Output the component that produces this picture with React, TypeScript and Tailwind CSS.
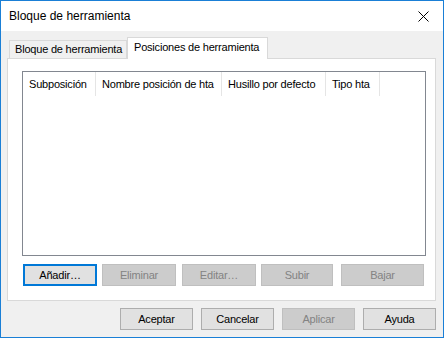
import React from 'react';

const columns = [
  { label: 'Subposición', width: 'w-[73px]' },
  { label: 'Nombre posición de hta', width: 'w-[126px]' },
  { label: 'Husillo por defecto', width: 'w-[104px]' },
  { label: 'Tipo hta', width: 'w-[54px]' },
];

const Button: React.FC<{ label: string; disabled?: boolean; focused?: boolean; className?: string }> = ({
  label,
  disabled,
  focused,
  className = '',
}) => {
  let style = 'bg-[#e1e1e1] border border-[#adadad] text-black';
  if (disabled) style = 'bg-[#cccccc] border border-[#bfbfbf] text-[#838383]';
  if (focused) style = 'bg-[#e1e1e1] border-2 border-[#0078d7] text-black';
  return (
    <div
      className={`h-[22px] shrink-0 flex items-center justify-center text-[11px] tracking-[-0.2px] leading-none whitespace-nowrap ${style} ${className}`}
    >
      {label}
    </div>
  );
};

export default function App() {
  return (
    <div
      className="w-[444px] h-[338px] border border-[#1a7fd6] flex flex-col bg-[#f0f0f0] text-black overflow-hidden"
      style={{ fontFamily: '"Liberation Sans", Arial, sans-serif' }}
    >
      {/* Title bar */}
      <div className="h-[30px] bg-white flex items-center justify-between pl-[8px] pr-[10px] shrink-0">
        <span className="text-[12px]">Bloque de herramienta</span>
        <svg width="11" height="11" viewBox="0 0 11 11" className="mr-[4px]">
          <path d="M0.5 0.5 L10.5 10.5 M10.5 0.5 L0.5 10.5" stroke="#000" strokeWidth="1" />
        </svg>
      </div>

      {/* Tabs */}
      <div className="flex items-end ml-[8px] mt-[6px] h-[21px] relative z-10 text-[11px] tracking-[-0.2px] whitespace-nowrap">
        <div className="w-[118px] h-[18px] border border-b-0 border-[#d9d9d9] bg-[#f0f0f0] flex items-center pl-[5px]">
          Bloque de herramienta
        </div>
        <div className="w-[141px] h-[22px] -mb-px border border-b-0 border-[#d9d9d9] bg-white flex items-center pl-[6px] pb-[3px]">
          Posiciones de herramienta
        </div>
      </div>

      {/* Panel */}
      <div className="ml-[6px] w-[429px] h-[243px] border border-[#d9d9d9] bg-white flex flex-col">
        <div className="ml-[14px] mt-[12px] w-[404px] h-[185px] border border-[#828790] bg-white">
          <div className="flex h-[24px]">
            {columns.map((c) => (
              <div
                key={c.label}
                className={`${c.width} border-r border-[#e5e5e5] flex items-center pl-[6px] text-[11px] tracking-[-0.2px] whitespace-nowrap`}
              >
                {c.label}
              </div>
            ))}
          </div>
        </div>
        <div className="flex ml-[15px] mt-[8px]">
          <Button label="Añadir…" focused className="w-[74px]" />
          <Button label="Eliminar" disabled className="w-[74px] ml-[5px]" />
          <Button label="Editar…" disabled className="w-[74px] ml-[6px]" />
          <Button label="Subir" disabled className="w-[72px] ml-[5px]" />
          <Button label="Bajar" disabled className="w-[83px] ml-[8px]" />
        </div>
      </div>

      {/* Dialog buttons */}
      <div className="flex ml-[119px] mt-[7px] gap-[8px]">
        <Button label="Aceptar" className="w-[73px]" />
        <Button label="Cancelar" className="w-[73px]" />
        <Button label="Aplicar" disabled className="w-[73px]" />
        <Button label="Ayuda" className="w-[73px]" />
      </div>
    </div>
  );
}
